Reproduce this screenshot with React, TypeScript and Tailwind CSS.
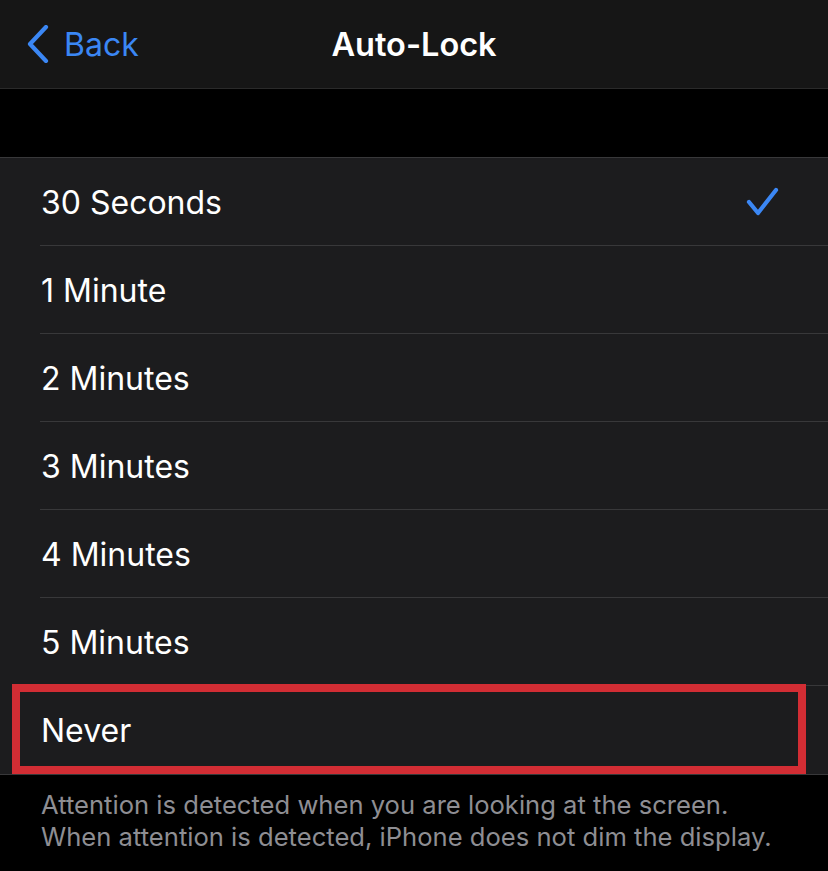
import React from "react";

const items = ["30 Seconds", "1 Minute", "2 Minutes", "3 Minutes", "4 Minutes", "5 Minutes", "Never"];

export default function App() {
  return (
    <div className="w-[828px] h-[871px] bg-black overflow-hidden" style={{ fontFamily: "Inter, 'Noto Sans', sans-serif" }}>
      <div className="relative h-[89px] bg-[#161616] border-b border-[#2a2a2a] flex items-center">
        <div className="flex items-center pl-[26px] gap-[14px] text-[#3b87f4]">
          <svg width="24" height="38" viewBox="0 0 24 38" fill="none">
            <path d="M20 2 L4 19 L20 36" stroke="#3b87f4" strokeWidth="4.2" strokeLinecap="round" strokeLinejoin="round" />
          </svg>
          <span className="text-[32px] leading-none pt-[2px]">Back</span>
        </div>
        <div className="absolute inset-x-0 top-0 h-[88px] flex items-center justify-center pointer-events-none">
          <span className="text-white text-[32.5px] font-semibold leading-none pt-[2px]">Auto-Lock</span>
        </div>
      </div>
      <div className="h-[68px] bg-black" />
      <div className="bg-[#1c1c1e] border-t border-b border-[#38383a]">
        {items.map((label, i) => (
          <div key={label} className="relative pl-[40px]">
            <div className={`h-[88px] flex items-center justify-between pr-[48px] ${i < items.length - 1 ? "border-b border-[#38383a]" : ""}`}>
              <span className="text-white text-[32px] leading-none pl-[1px] pt-[2px]">{label}</span>
              {i === 0 && (
                <svg width="34" height="32" viewBox="0 0 34 32" fill="none">
                  <path d="M3 16 L12 27 L30 4" stroke="#3b87f4" strokeWidth="4.2" strokeLinecap="round" strokeLinejoin="round" />
                </svg>
              )}
            </div>
            {label === "Never" && (
              <div className="absolute left-[12px] top-[-2px] w-[794px] h-[90px] border-[8px] border-[#d22d34]" />
            )}
          </div>
        ))}
      </div>
      <div className="pl-[41px] pt-[14px] text-[#8e8e93] text-[25.6px] leading-[32px]">
        <div>Attention is detected when you are looking at the screen.</div>
        <div>When attention is detected, iPhone does not dim the display.</div>
      </div>
    </div>
  );
}
